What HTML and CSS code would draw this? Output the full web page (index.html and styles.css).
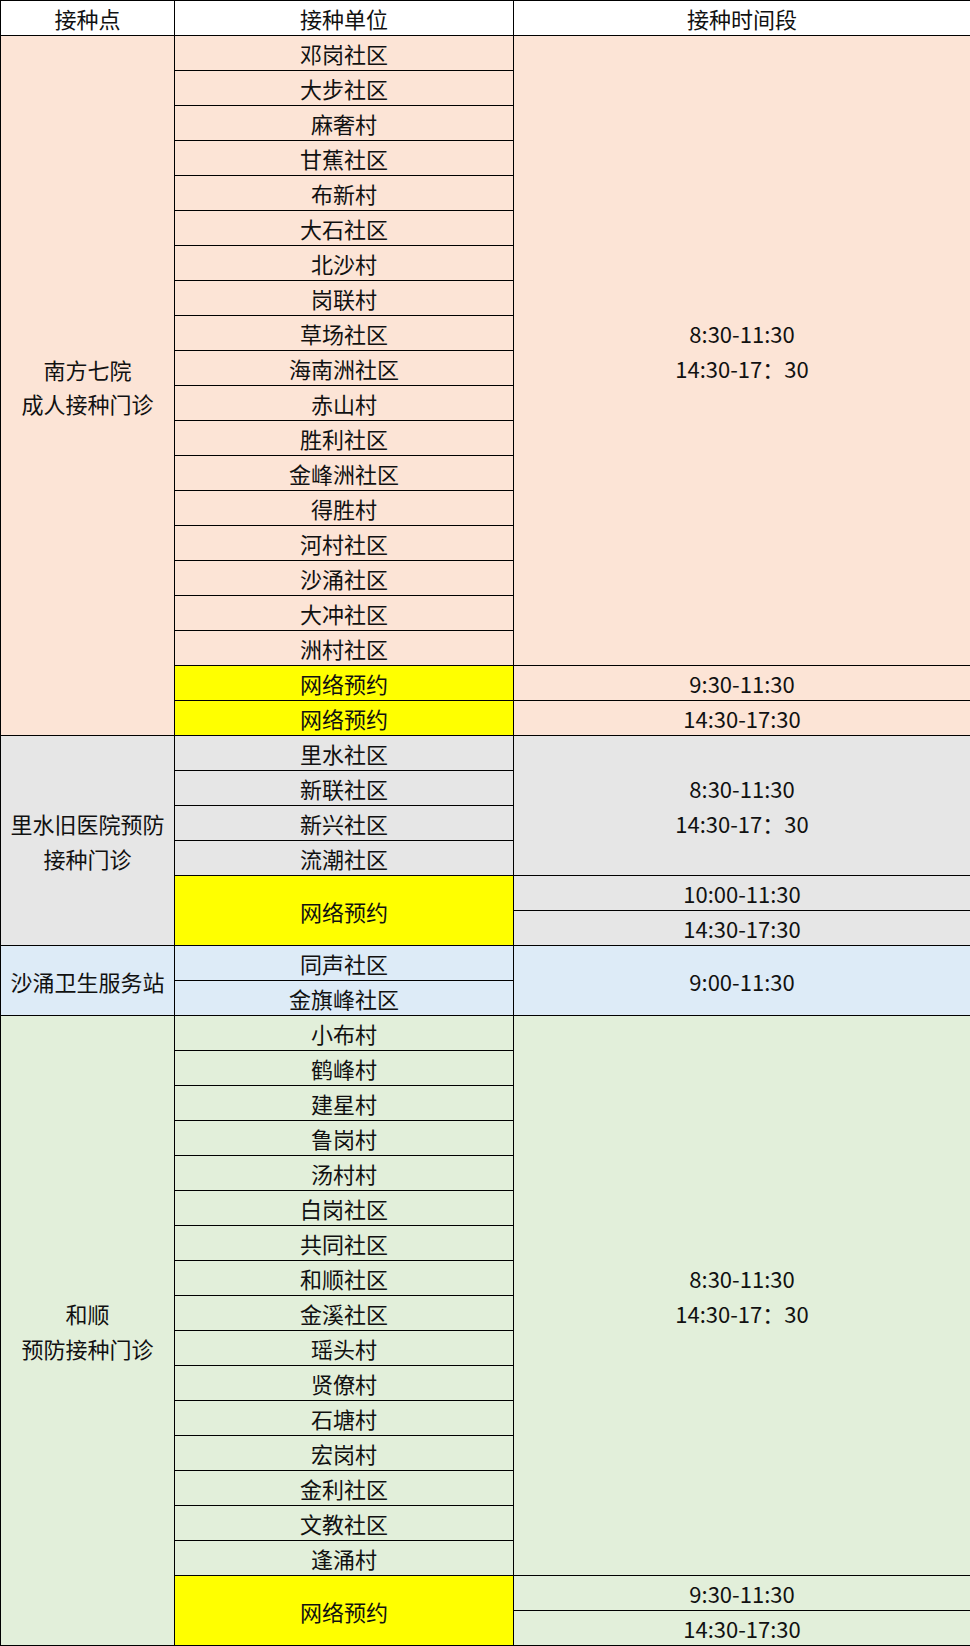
FILE: index.html
```html
<!DOCTYPE html>
<html lang="zh">
<head>
<meta charset="utf-8">
<title>接种安排</title>
<link rel="stylesheet" href="styles.css">
</head>
<body>
<table class="sched">
  <colgroup><col class="c1"><col class="c2"><col class="c3"></colgroup>
  <thead>
    <tr><th>接种点</th><th>接种单位</th><th>接种时间段</th></tr>
  </thead>
  <tbody class="g-peach">
    <tr><td rowspan="20">南方七院<br>成人接种门诊</td><td>邓岗社区</td><td rowspan="18" class="multi">8:30-11:30<br>14:30-17：30</td></tr>
    <tr><td>大步社区</td></tr>
    <tr><td>麻奢村</td></tr>
    <tr><td>甘蕉社区</td></tr>
    <tr><td>布新村</td></tr>
    <tr><td>大石社区</td></tr>
    <tr><td>北沙村</td></tr>
    <tr><td>岗联村</td></tr>
    <tr><td>草场社区</td></tr>
    <tr><td>海南洲社区</td></tr>
    <tr><td>赤山村</td></tr>
    <tr><td>胜利社区</td></tr>
    <tr><td>金峰洲社区</td></tr>
    <tr><td>得胜村</td></tr>
    <tr><td>河村社区</td></tr>
    <tr><td>沙涌社区</td></tr>
    <tr><td>大冲社区</td></tr>
    <tr><td>洲村社区</td></tr>
    <tr><td class="yellow">网络预约</td><td>9:30-11:30</td></tr>
    <tr><td class="yellow">网络预约</td><td>14:30-17:30</td></tr>
  </tbody>
  <tbody class="g-gray">
    <tr><td rowspan="6" class="multi">里水旧医院预防<br>接种门诊</td><td>里水社区</td><td rowspan="4" class="multi">8:30-11:30<br>14:30-17：30</td></tr>
    <tr><td>新联社区</td></tr>
    <tr><td>新兴社区</td></tr>
    <tr><td>流潮社区</td></tr>
    <tr><td class="yellow" rowspan="2">网络预约</td><td>10:00-11:30</td></tr>
    <tr><td>14:30-17:30</td></tr>
  </tbody>
  <tbody class="g-blue">
    <tr><td rowspan="2">沙涌卫生服务站</td><td>同声社区</td><td rowspan="2">9:00-11:30</td></tr>
    <tr><td>金旗峰社区</td></tr>
  </tbody>
  <tbody class="g-green">
    <tr><td rowspan="18" class="multi">和顺<br>预防接种门诊</td><td>小布村</td><td rowspan="16" class="multi">8:30-11:30<br>14:30-17：30</td></tr>
    <tr><td>鹤峰村</td></tr>
    <tr><td>建星村</td></tr>
    <tr><td>鲁岗村</td></tr>
    <tr><td>汤村村</td></tr>
    <tr><td>白岗社区</td></tr>
    <tr><td>共同社区</td></tr>
    <tr><td>和顺社区</td></tr>
    <tr><td>金溪社区</td></tr>
    <tr><td>瑶头村</td></tr>
    <tr><td>贤僚村</td></tr>
    <tr><td>石塘村</td></tr>
    <tr><td>宏岗村</td></tr>
    <tr><td>金利社区</td></tr>
    <tr><td>文教社区</td></tr>
    <tr><td>逢涌村</td></tr>
    <tr><td class="yellow" rowspan="2">网络预约</td><td>9:30-11:30</td></tr>
    <tr><td>14:30-17:30</td></tr>
  </tbody>
</table>
</body>
</html>
```

FILE: styles.css
```css
html, body {
  margin: 0;
  padding: 0;
  background: #ffffff;
}
.sched {
  border-collapse: collapse;
  table-layout: fixed;
  width: 970px;
  font-family: "Noto Sans CJK SC", "Noto Sans", sans-serif;
  font-size: 22px;
  color: #111111;
}
.c1 { width: 174px; }
.c2 { width: 339px; }
.c3 { width: 457px; }
.sched tr { height: 35px; }
.sched th,
.sched td {
  border: 1px solid #000000;
  padding: 0;
  text-align: center;
  vertical-align: middle;
  line-height: 34px;
  font-weight: normal;
  white-space: nowrap;
}
.sched td.multi { line-height: 35px; }
.sched th { background: #ffffff; }
.g-peach td { background: #fce4d6; }
.g-gray td { background: #e6e6e6; }
.g-blue td { background: #ddebf7; }
.g-green td { background: #e2efda; }
.sched td.yellow { background: #ffff00; }
```
